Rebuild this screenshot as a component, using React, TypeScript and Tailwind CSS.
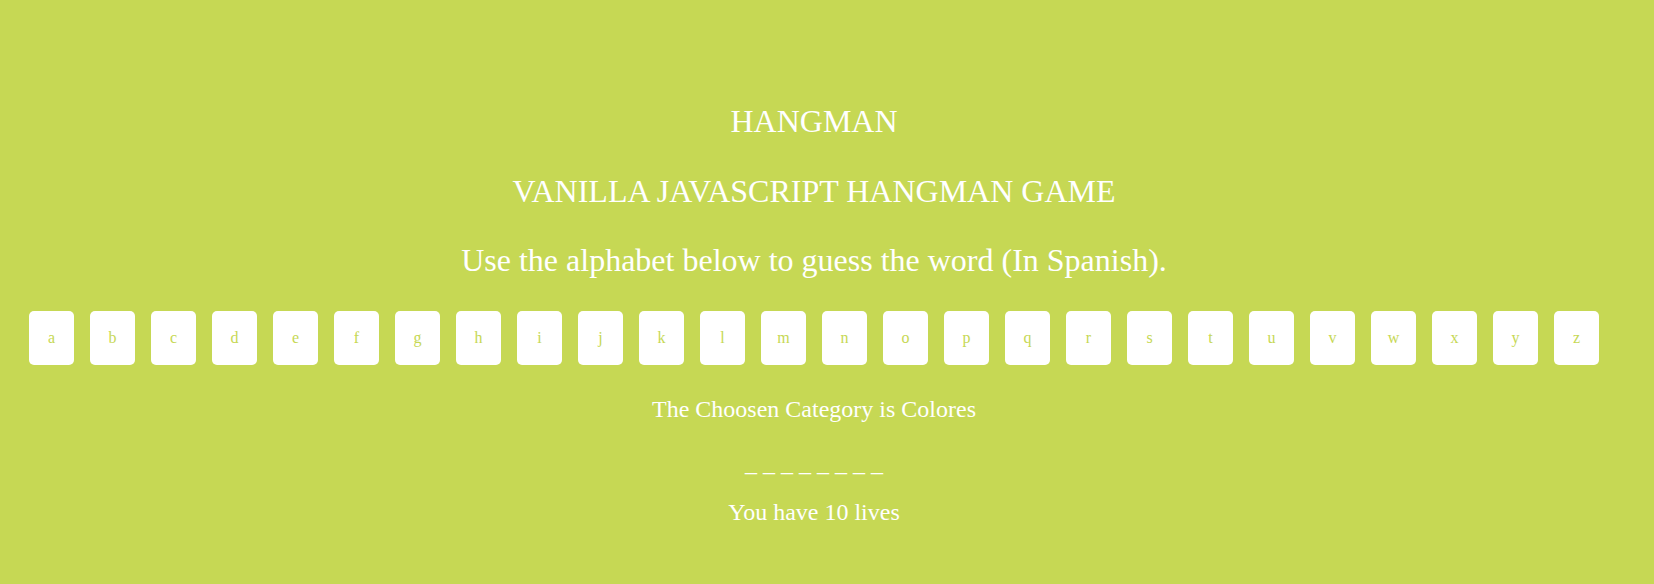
import React from "react";

const letters = "abcdefghijklmnopqrstuvwxyz".split("");

export default function App() {
  return (
    <div className="min-h-[584px] w-full bg-[#c6d854] font-['Liberation_Serif',serif] text-white">
      <div className="flex w-[1628px] flex-col items-center text-center">
        <h1 className="mt-[105px] text-[32px] leading-none font-normal">HANGMAN</h1>
        <h2 className="mt-[38px] text-[32px] leading-none font-normal">VANILLA JAVASCRIPT HANGMAN GAME</h2>
        <p className="mt-[37px] text-[32px] leading-none">
          Use the alphabet below to guess the word (In Spanish).
        </p>
        <ul className="mt-[35px] flex gap-4">
          {letters.map((l) => (
            <li key={l}>
              <button className="flex h-[54px] w-[45px] items-center justify-center rounded-[5px] bg-white text-[16px] leading-none text-[#c6d854]">
                {l}
              </button>
            </li>
          ))}
        </ul>
        <p className="mt-[32px] text-[24px] leading-none">The Choosen Category is Colores</p>
        <p className="mt-[30px] text-[24px] leading-none whitespace-pre">_ _ _ _ _ _ _ _</p>
        <p className="mt-[25px] text-[24px] leading-none">You have 10 lives</p>
      </div>
    </div>
  );
}
